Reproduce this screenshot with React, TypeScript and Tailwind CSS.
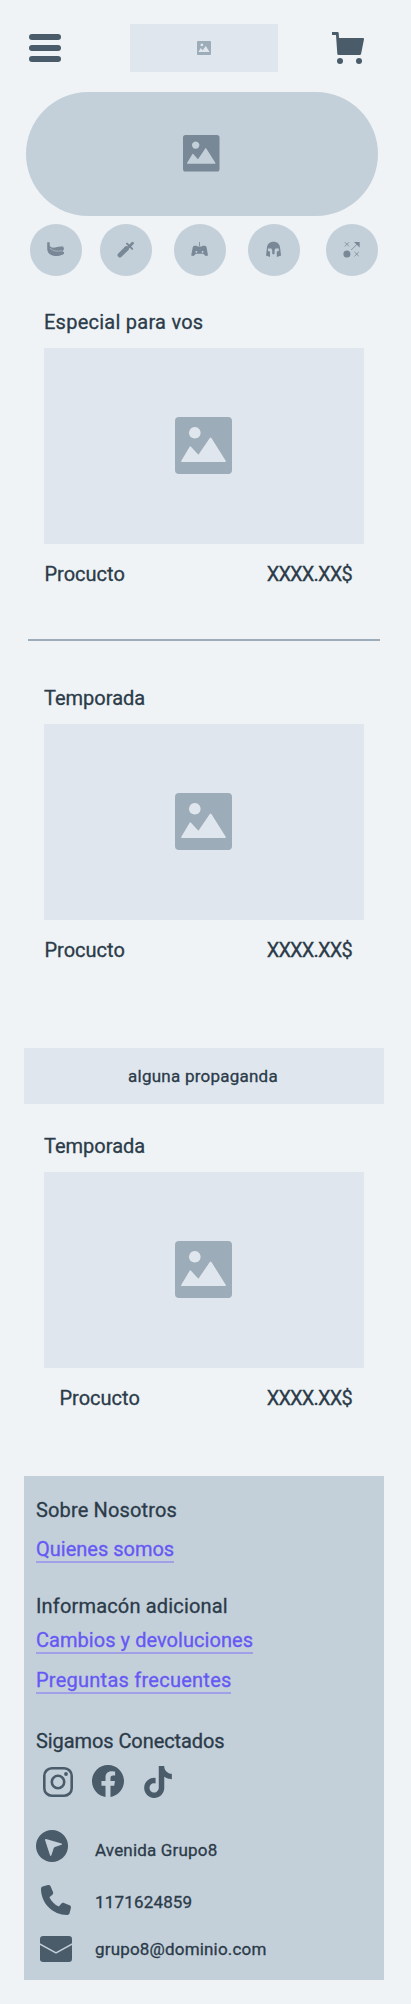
import type { ReactNode } from "react";
import { BsFacebook } from "react-icons/bs";
import { FaPhone } from "react-icons/fa6";
import { IoLogoTiktok } from "react-icons/io5";

function Picture({ className }: { className: string }) {
  return (
    <svg viewBox="0 0 57 57" className={className} fill="currentColor">
      <path
        fillRule="evenodd"
        d="M4 0H53a4 4 0 0 1 4 4V53a4 4 0 0 1-4 4H4a4 4 0 0 1-4-4V4a4 4 0 0 1 4-4ZM19.8 10a5.8 5.8 0 1 0 .01 0ZM6.3 43.7Q5.7 45 7 45H50Q51.3 45 50.7 43.7L36.4 21Q35.6 19.8 34.8 21L23.4 37.8 16 29.7Q15.2 28.8 14.5 30Z"
      />
    </svg>
  );
}

function CartIcon() {
  return (
    <svg viewBox="0 0 32 32" className="size-8" fill="currentColor">
      <path d="M0 0H5.6Q6.6 0 6.7 1L7 6H31Q32.2 6 32 7.2L29.1 21.8Q28.8 23 27.6 23H6.6Q5.4 23 5.3 21.8L4 3H0Z" />
      <circle cx="8" cy="29" r="3" />
      <circle cx="27" cy="29" r="3" />
    </svg>
  );
}

function BananaIcon() {
  return (
    <>
      <path d="M17.2 18.3h2.500v3.200c.5 1.7 2.900 2.500 5.600 2.100 2.600-1.200 5.200-1.100 7.900-1.100l.8 2.300c-.2 1.200-.9 2-1.900 2.600 1.100 0 1.900.3 1.900.9v1.500c-2.800 1.900-6.800 2.600-10.600 2-4-.8-6.200-3.500-6.200-7.200z" />
      <path d="M20 24c2.600 3.100 7 3.700 12 2.700" fill="none" stroke="#c3cfd9" strokeWidth=".6" />
    </>
  );
}

function DropperIcon() {
  return (
    <g fill="none" stroke="currentColor">
      <path d="M19.900 31.200 26.600 24.500" strokeWidth="4.600" strokeLinecap="round" />
      <path d="m25.300 23 2.900 2.900" strokeWidth="2.400" />
      <path d="m27 19.600 5.200 5.200" strokeWidth="1.900" strokeLinecap="round" />
      <path d="m29 22.800 3.600-3.700" strokeWidth="2.700" strokeLinecap="round" />
    </g>
  );
}

function GamepadIcon() {
  return (
    <>
      <path d="M25.100 18h.8v4h-.8z" />
      <path
        fillRule="evenodd"
        d="M20 21.700h2.600l1 .9h4.100l1-.9h2.600l1.200 1.300L34 31.500l-2.400.5-2.300-2.200h-7.500l-2.200 2.200-2.400-.5L18.800 23zM22.400 26.900a.9.9 0 1 0 .01 0ZM28.600 26.900a.9.9 0 1 0 .01 0Z"
      />
    </>
  );
}

function HelmetIcon() {
  return (
    <path d="M25.500 17.700c3.900 0 6.500 2.600 6.600 6.400l1 7.400-4.300 1.500V27.500l2-.6v-2.300h-3.400l-.8 1.700v3.500l-1.200.8-1.200-.8v-3.500l-.8-1.700H20v2.300l2 .6V33l-4-1.500.9-7.400c.1-3.800 2.700-6.400 6.600-6.400z" />
  );
}

function StrategyIcon() {
  return (
    <>
      <circle cx="20.900" cy="30" r="3.500" />
      <path d="M28 18h5.600v5.600z" />
      <path
        d="m25.200 26 6.800-6.800M18.800 18.200l4.200 4.200M23 18.200l-4.200 4.200M28.600 28l4.200 4.200M32.800 28l-4.200 4.200"
        fill="none"
        stroke="currentColor"
        strokeWidth=".8"
      />
    </>
  );
}

function Category({ children }: { children: ReactNode }) {
  return (
    <button className="size-13 rounded-full bg-[#c3cfd9] text-[#788896]">
      <svg viewBox="0 0 52 52" className="size-13" fill="currentColor">
        {children}
      </svg>
    </button>
  );
}

function Product({ title, titleClass = "", nameClass = "pl-[0.5px]" }: { title: string; titleClass?: string; nameClass?: string }) {
  return (
    <section className="mx-11 w-80">
      <h2 className={`leading-6 ${titleClass}`}>{title}</h2>
      <div className="mt-3.5 flex h-49 items-center justify-center bg-[#dfe6ee] pr-px pb-px text-[#9dacb9]">
        <Picture className="size-[57px]" />
      </div>
      <div className="mt-4.5 flex justify-between pr-3 leading-6">
        <span className={nameClass}>Procucto</span>
        <span className="tracking-[-0.8px]">XXXX.XX$</span>
      </div>
    </section>
  );
}

function FooterLink({ children, className }: { children: string; className: string }) {
  return (
    <a href="#" className={`block border-b-2 border-[#a09fe8] whitespace-nowrap text-[#6658f4] ${className}`}>
      {children}
    </a>
  );
}

function InstagramIcon() {
  return (
    <svg viewBox="0 0 30 30" className="mt-0.5 size-[30px]" fill="none" stroke="currentColor" strokeWidth="2.6">
      <rect x="1.300" y="1.300" width="27.400" height="27.400" rx="7.500" />
      <circle cx="15" cy="15" r="6.200" />
      <circle cx="23" cy="7" r="1.900" fill="currentColor" stroke="none" />
    </svg>
  );
}

function CompassIcon() {
  return (
    <svg viewBox="0 0 32 32" className="size-8">
      <circle cx="16" cy="16" r="16" fill="currentColor" />
      <path d="M10 9 25.600 13.500Q26.800 14.200 25.600 14.800L19 17Q18 17.300 17.700 18.300L15.400 25.200Q14.600 26.600 14 25.200L9 10Q8.900 8.900 10 9Z" fill="#c3cfd9" />
    </svg>
  );
}

function MailIcon() {
  return (
    <svg viewBox="0 0 32 26" className="h-6.5 w-8">
      <rect width="32" height="26" rx="3.200" fill="currentColor" />
      <path d="M-1 7.600 16 16.800 33 7.600" fill="none" stroke="#c3cfd9" strokeWidth="1.500" />
    </svg>
  );
}

export default function App() {
  return (
    <div className="h-[2004px] w-[411px] bg-[#eff3f6] font-[Roboto,sans-serif] text-xl leading-6 font-normal text-[#2b3b49] [-webkit-text-stroke:0.3px_currentColor]">
      <header className="flex h-[92px] items-center pb-5 pl-[29px] pt-6 text-[#4a5b69]">
        <button className="flex w-8 flex-col gap-[5.400px]" aria-label="Menú">
          <i className="h-[5.600px] rounded-full bg-current" />
          <i className="h-[5.600px] rounded-full bg-current" />
          <i className="h-[5.600px] rounded-full bg-current" />
        </button>
        <div className="mr-[54px] ml-[69px] flex h-12 w-37 items-center justify-center bg-[#dfe6ee] text-[#9dacb9]">
          <Picture className="size-3.5" />
        </div>
        <CartIcon />
      </header>

      <div className="ml-[26px] flex h-31 w-88 items-center justify-center rounded-full bg-[#c3cfd9] pr-px pb-px text-[#788896]">
        <Picture className="size-[36.500px]" />
      </div>

      <nav className="mt-2 ml-[30px] grid w-87 grid-cols-[70px_74px_74px_78px_52px]">
        <Category><BananaIcon /></Category>
        <Category><DropperIcon /></Category>
        <Category><GamepadIcon /></Category>
        <Category><HelmetIcon /></Category>
        <Category><StrategyIcon /></Category>
      </nav>

      <div className="pt-[34px]">
        <Product title="Especial para vos" titleClass="tracking-[0.25px]" />
      </div>
      <hr className="mt-[53px] mb-[45px] ml-7 w-88 border-t-2 border-[#9dacb9]" />
      <Product title="Temporada" />

      <div className="mt-[86px] mb-[30px] ml-6 flex h-14 w-90 items-center justify-center bg-[#dfe6ee] pr-0.5 text-[17px] leading-5 tracking-[0.24px]">
        alguna propaganda
      </div>
      <Product title="Temporada" nameClass="pl-[15.5px]" />

      <footer className="mt-[66px] ml-6 flex h-126 w-90 flex-col items-start bg-[#c3cfd9] pt-[22px] pl-3">
        <h3 className="tracking-[0.15px]">Sobre Nosotros</h3>
        <FooterLink className="mt-[15px] w-[138px]">Quienes somos</FooterLink>
        <h3 className="mt-[31px] tracking-[0.17px]">Informacón adicional</h3>
        <FooterLink className="mt-2.5 w-[217px] tracking-[0.05px]">Cambios y devoluciones</FooterLink>
        <FooterLink className="mt-3.5 w-[195px] tracking-[0.25px]">Preguntas frecuentes</FooterLink>
        <h3 className="mt-[35px] tracking-[-0.08px]">Sigamos Conectados</h3>

        <div className="mt-3 ml-[7px] flex items-start text-[#4a5b69]">
          <InstagramIcon />
          <BsFacebook className="ml-[19px] size-8" />
          <IoLogoTiktok className="ml-[17px] size-[34px]" />
        </div>

        <address className="mt-[31px] text-[17px] leading-5 tracking-[0.18px] not-italic">
          <div className="flex h-8">
            <span className="w-[59px] text-[#4a5b69]"><CompassIcon /></span>
            <span className="pt-2.5">Avenida Grupo8</span>
          </div>
          <div className="mt-[23px] flex h-[30px]">
            <span className="w-[59px] pl-[5px] text-[#4a5b69]"><FaPhone className="size-[30px]" /></span>
            <span className="pt-[7px]">1171624859</span>
          </div>
          <div className="mt-[21px] flex h-6.5">
            <span className="w-[59px] pl-1 text-[#4a5b69]"><MailIcon /></span>
            <span className="pt-[3px]">grupo8@dominio.com</span>
          </div>
        </address>
      </footer>
    </div>
  );
}
